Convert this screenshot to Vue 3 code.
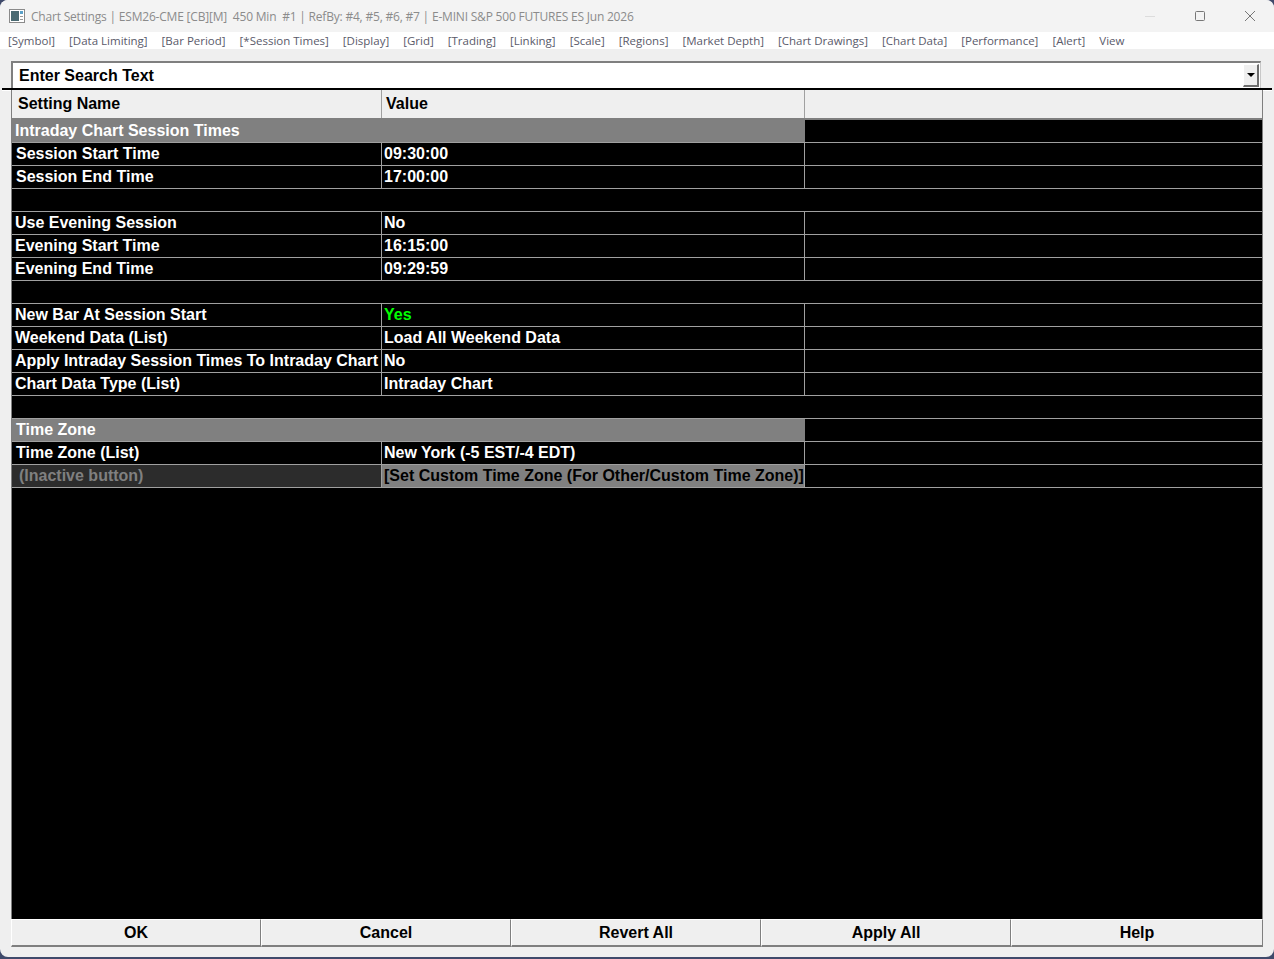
<template>
  <div class="window">
    <div class="titlebar">
      <svg class="app-icon" width="16" height="14" viewBox="0 0 16 14">
        <rect x="0.5" y="0.5" width="15" height="13" fill="#fff" stroke="#8a8a8a" />
        <rect x="2" y="2" width="8" height="10" fill="#4a6a72" />
        <rect x="11" y="2" width="3" height="3" fill="#5aa0c8" />
        <rect x="11" y="7" width="3" height="1" fill="#999" />
        <rect x="11" y="10" width="3" height="1" fill="#999" />
      </svg>
      <span class="title">Chart Settings | ESM26-CME [CB][M]&nbsp; 450 Min&nbsp; #1 | RefBy: #4, #5, #6, #7 | E-MINI S&amp;P 500 FUTURES ES Jun 2026</span>
      <div class="win-controls">
        <svg width="12" height="12" viewBox="0 0 12 12"><path d="M1 6.5h10" stroke="#dcdcdc" /></svg>
        <svg width="12" height="12" viewBox="0 0 12 12"><rect x="1.5" y="1.5" width="9" height="9" rx="1" fill="none" stroke="#777" /></svg>
        <svg width="12" height="12" viewBox="0 0 12 12"><path d="M1 1l10 10M11 1L1 11" stroke="#777" fill="none" /></svg>
      </div>
    </div>

    <div class="menubar">
      <span v-for="item in menuItems" :key="item">{{ item }}</span>
    </div>

    <div class="search">
      <span class="search-text">Enter Search Text</span>
      <button class="search-btn" tabindex="-1">
        <span class="arrow"></span>
      </button>
    </div>
    <div class="divider"></div>

    <div class="grid">
      <div class="row header">
        <div class="cell name">Setting Name</div>
        <div class="cell value">Value</div>
        <div class="cell rest"></div>
      </div>
      <template v-for="(row, i) in rows" :key="i">
        <div v-if="row.group" class="row group">
          <div class="group-label" :class="row.cls">{{ row.group }}</div>
        </div>
        <div v-else-if="row.blank" class="row blank"></div>
        <div v-else class="row" :class="{ inactive: row.inactive }">
          <div class="cell name" :class="row.cls">{{ row.name }}</div>
          <div class="cell value" :class="{ green: row.green }">{{ row.value }}</div>
          <div class="cell rest"></div>
        </div>
      </template>
    </div>

    <div class="buttons">
      <button v-for="b in buttons" :key="b" class="btn">{{ b }}</button>
    </div>
  </div>
</template>

<script setup>
const menuItems = [
  '[Symbol]', '[Data Limiting]', '[Bar Period]', '[*Session Times]', '[Display]', '[Grid]',
  '[Trading]', '[Linking]', '[Scale]', '[Regions]', '[Market Depth]', '[Chart Drawings]',
  '[Chart Data]', '[Performance]', '[Alert]', 'View'
]

const rows = [
  { group: 'Intraday Chart Session Times' },
  { name: 'Session Start Time', value: '09:30:00', cls: 'shift' },
  { name: 'Session End Time', value: '17:00:00', cls: 'shift' },
  { blank: true },
  { name: 'Use Evening Session', value: 'No' },
  { name: 'Evening Start Time', value: '16:15:00' },
  { name: 'Evening End Time', value: '09:29:59' },
  { blank: true },
  { name: 'New Bar At Session Start', value: 'Yes', green: true },
  { name: 'Weekend Data (List)', value: 'Load All Weekend Data' },
  { name: 'Apply Intraday Session Times To Intraday Chart', value: 'No' },
  { name: 'Chart Data Type (List)', value: 'Intraday Chart' },
  { blank: true },
  { group: 'Time Zone', cls: 'shift' },
  { name: 'Time Zone (List)', value: 'New York (-5 EST/-4 EDT)', cls: 'shift' },
  { name: '(Inactive button)', value: '[Set Custom Time Zone (For Other/Custom Time Zone)]', inactive: true, cls: 'shift-more' }
]

const buttons = ['OK', 'Cancel', 'Revert All', 'Apply All', 'Help']
</script>

<style>
html,
body {
  margin: 0;
  background: #3f4a6b;
}
</style>

<style scoped>
.window {
  width: 1274px;
  height: 957px;
  background: #efefef;
  border-radius: 8px;
  overflow: hidden;
  display: flex;
  flex-direction: column;
  font-family: "Liberation Sans", Arial, sans-serif;
}

.titlebar {
  height: 32px;
  display: flex;
  align-items: center;
  padding-left: 9px;
  background: #f3f3f3;
  box-sizing: border-box;
}

.app-icon {
  margin-right: 6px;
}

.title {
  font-family: "Open Sans", "Noto Sans", sans-serif;
  font-size: 12px;
  letter-spacing: -0.2px;
  color: #8b8b8b;
  white-space: nowrap;
}

.win-controls {
  margin-left: auto;
  width: 112px;
  padding-right: 18px;
  display: flex;
  justify-content: space-between;
}

.menubar {
  height: 17px;
  background: #fff;
  display: flex;
  gap: 14px;
  padding-left: 8px;
  align-items: center;
  font-family: "Open Sans", "Noto Sans", sans-serif;
  font-size: 11.5px;
  color: #5a5a6a;
  white-space: nowrap;
}

.search {
  margin: 12px 13px 0 11px;
  height: 27px;
  box-sizing: border-box;
  background: #fff;
  border-top: 2px solid #7f7f7f;
  border-left: 2px solid #7f7f7f;
  border-right: 1px solid #c8c8c8;
  display: flex;
  align-items: center;
  padding-left: 6px;
  justify-content: space-between;
}

.search-text {
  font-size: 16px;
  font-weight: bold;
  color: #000;
}

.search-btn {
  width: 16px;
  height: 23px;
  padding: 0;
  margin-right: 1px;
  background: #efefef;
  border: 1px solid #fff;
  border-right: 2px solid #6e6e6e;
  border-bottom: 2px solid #6e6e6e;
  display: flex;
  align-items: center;
  justify-content: center;
}

.arrow {
  border-left: 4px solid transparent;
  border-right: 4px solid transparent;
  border-top: 4px solid #000;
}

.divider {
  height: 2px;
  margin: 0 2px 0 2px;
  background: #000;
  box-shadow: 0 1px 0 #fff;
}

.grid {
  flex: 1;
  margin: 0 11px 0 11px;
  background: #000;
  border-left: 1px solid #7f7f7f;
  border-right: 1px solid #7f7f7f;
  display: flex;
  flex-direction: column;
  color: #fff;
  font-size: 16px;
  font-weight: bold;
}

.row {
  display: grid;
  grid-template-columns: 370px 423px 1fr;
  height: 23px;
  box-sizing: border-box;
  border-bottom: 1px solid #a0a0a0;
}

.row.header {
  height: 30px;
  background: #efefef;
  color: #000;
  border-bottom: 2px solid #7f7f7f;
}

.row.header .cell {
  line-height: 28px;
  border-color: #a0a0a0;
}

.row.header .name {
  padding-left: 6px;
}

.row.header .value {
  padding-left: 4px;
}

.row.group {
  display: block;
}

.group-label {
  width: 793px;
  height: 22px;
  line-height: 21px;
  background: #808080;
  padding-left: 3px;
  box-sizing: border-box;
}

.group-label.shift {
  padding-left: 4px;
}

.row.blank {
  border-bottom: 1px solid #a0a0a0;
}

.cell {
  line-height: 21px;
  white-space: nowrap;
  box-sizing: border-box;
  border-right: 1px solid #a0a0a0;
}

.cell.rest {
  border-right: 0;
}

.cell.name {
  padding-left: 3px;
}

.cell.name.shift {
  padding-left: 4px;
}

.cell.name.shift-more {
  padding-left: 7px;
}

.cell.value {
  padding-left: 2px;
}

.green {
  color: #00ff00;
}

.row.inactive .name {
  background: #2c2c2c;
  color: #808080;
}

.row.inactive .value {
  background: #808080;
  color: #000;
}

.buttons {
  display: grid;
  grid-template-columns: repeat(4, 250px) 1fr;
  margin: 0 11px 10px 11px;
  height: 28px;
  flex-shrink: 0;
}

.btn {
  font-family: "Liberation Sans", Arial, sans-serif;
  font-size: 16px;
  font-weight: bold;
  color: #000;
  background: #efefef;
  border: 0;
  padding: 0;
  border-top: 1px solid #fff;
  border-left: 1px solid #fff;
  border-right: 1px solid #7f7f7f;
  border-bottom: 2px solid #7f7f7f;
}
</style>
